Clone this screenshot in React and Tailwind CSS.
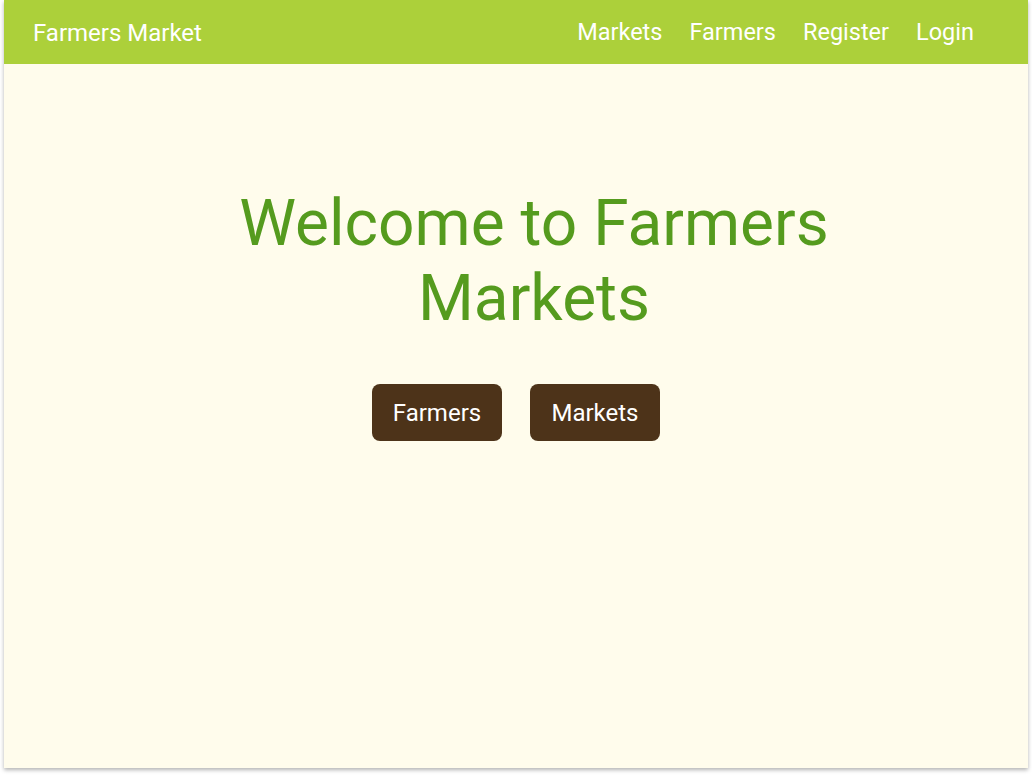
import React from 'react';

const font = { fontFamily: 'Roboto, "Noto Sans", sans-serif' };

const NavLink = ({ children }) => (
  <a href="#" className="text-white text-[23.5px] leading-none pt-[2px]">
    {children}
  </a>
);

const App = () => {
  return (
    <div className="bg-white min-h-screen pl-[4px]" style={font}>
      <div className="w-[1024px] h-[768px] bg-[#fffcec] shadow-[0_2px_4px_rgba(0,0,0,0.3)] flex flex-col">
        <header className="h-[64px] bg-[#acd03a] flex items-center justify-between pl-[29px] pr-[54px]">
          <a href="#" className="text-white text-[24px] leading-none pt-[1px]">
            Farmers Market
          </a>
          <nav className="flex items-center gap-[27px]">
            <NavLink>Markets</NavLink>
            <NavLink>Farmers</NavLink>
            <NavLink>Register</NavLink>
            <NavLink>Login</NavLink>
          </nav>
        </header>
        <main className="flex flex-col items-center pt-[122px]">
          <h1 className="text-[#559b1e] text-[64px] leading-[75px] text-center w-[620px] translate-x-[18px]">
            Welcome to Farmers Markets
          </h1>
          <div className="flex gap-[28px] mt-[48px]">
            <button className="w-[130px] h-[57px] rounded-[8px] bg-[#4d3319] text-white text-[24px]">
              Farmers
            </button>
            <button className="w-[130px] h-[57px] rounded-[8px] bg-[#4d3319] text-white text-[24px]">
              Markets
            </button>
          </div>
        </main>
      </div>
    </div>
  );
};

export default App;
